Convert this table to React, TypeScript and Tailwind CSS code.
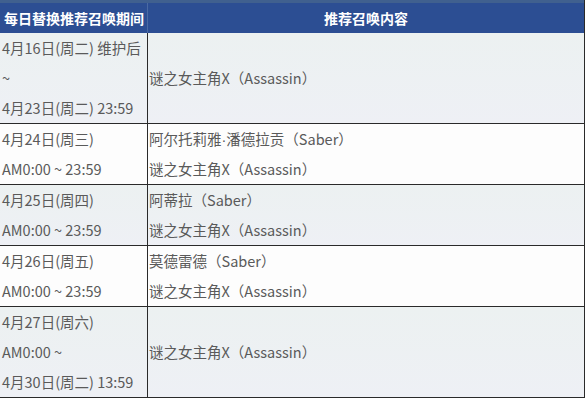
const font = { fontFamily: '"Microsoft YaHei", "Noto Sans CJK SC", "Noto Sans", sans-serif' };

type Row = { period: string[]; content: React.ReactNode[]; shaded: boolean };

const dot = <span style={{ fontFamily: '"Liberation Sans", sans-serif' }}>·</span>;

const rows: Row[] = [
  {
    period: ['4月16日(周二) 维护后', '~', '4月23日(周二) 23:59'],
    content: ['谜之女主角X（Assassin）'],
    shaded: true,
  },
  {
    period: ['4月24日(周三)', 'AM0:00 ~ 23:59'],
    content: [<>阿尔托莉雅{dot}潘德拉贡（Saber）</>, '谜之女主角X（Assassin）'],
    shaded: false,
  },
  {
    period: ['4月25日(周四)', 'AM0:00 ~ 23:59'],
    content: ['阿蒂拉（Saber）', '谜之女主角X（Assassin）'],
    shaded: true,
  },
  {
    period: ['4月26日(周五)', 'AM0:00 ~ 23:59'],
    content: ['莫德雷德（Saber）', '谜之女主角X（Assassin）'],
    shaded: false,
  },
  {
    period: ['4月27日(周六)', 'AM0:00 ~', '4月30日(周二) 13:59'],
    content: ['谜之女主角X（Assassin）'],
    shaded: true,
  },
];

export default function App() {
  return (
    <div className="w-[588px] h-[401px] bg-white" style={font}>
      <div className="w-[585px] border-r border-b border-[#2a2a2a]">
        {/* header */}
        <div className="grid grid-cols-[148px_1fr] h-[33px] bg-[#2c4e93] border-t-[3px] border-[#40608f] text-white font-bold text-[14px]">
          <div className="flex items-center pl-[4px] border-r border-[#4b6aa3]">每日替换推荐召唤期间</div>
          <div className="flex items-center justify-center">推荐召唤内容</div>
        </div>

        {rows.map((r, i) => (
          <div
            key={i}
            className={`grid grid-cols-[148px_1fr] text-[14.5px] text-[#5a5a5a] ${i > 0 ? 'border-t border-[#2a2a2a]' : ''} ${
              r.shaded ? 'bg-gradient-to-b from-[#ecf1f1] to-[#eef0f5]' : 'bg-[#fdfdfd]'
            }`}
          >
            <div className="border-r border-[#2a2a2a] pl-[2px] flex flex-col">
              {r.period.map((t, j) => (
                <div key={j} className="h-[30px] leading-[30px] whitespace-nowrap">{t}</div>
              ))}
            </div>
            <div className="pl-[1px] flex flex-col justify-center">
              {r.content.map((t, j) => (
                <div key={j} className="h-[30px] leading-[30px] whitespace-nowrap">{t}</div>
              ))}
            </div>
          </div>
        ))}
      </div>
    </div>
  );
}
